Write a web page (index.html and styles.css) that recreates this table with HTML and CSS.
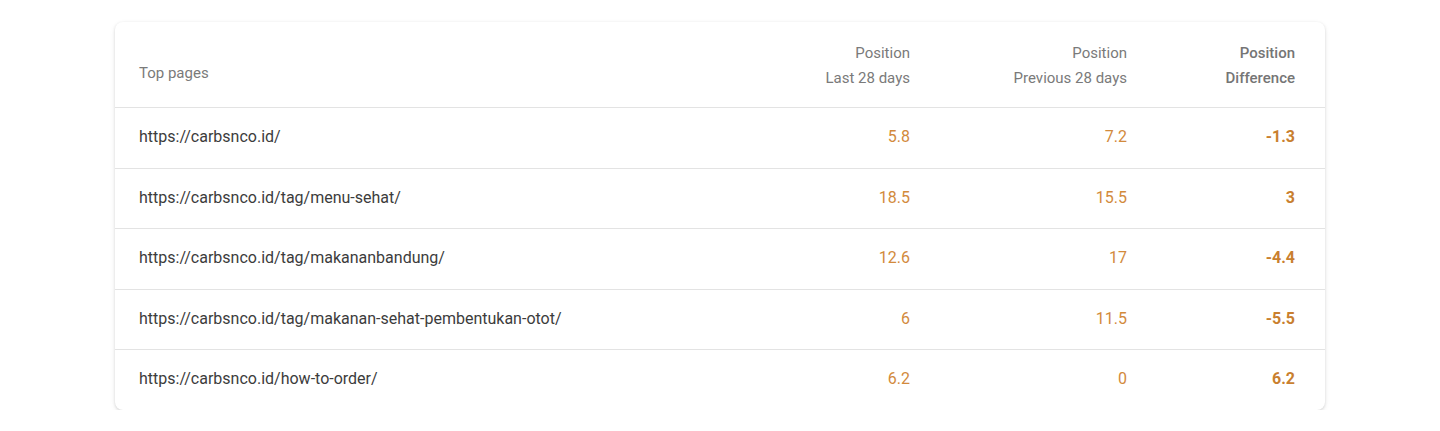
FILE: index.html
```html
<!DOCTYPE html>
<html lang="en">
<head>
<meta charset="utf-8">
<title>Top pages</title>
<link rel="stylesheet" href="styles.css">
</head>
<body>
<div class="card">
  <div class="row head">
    <div class="cell page top">Top pages</div>
    <div class="cell num">Position<br>Last 28 days</div>
    <div class="cell num">Position<br>Previous 28 days</div>
    <div class="cell num strong">Position<br>Difference</div>
  </div>
  <div class="row">
    <div class="cell page">https://carbsnco.id/</div>
    <div class="cell num val">5.8</div>
    <div class="cell num val">7.2</div>
    <div class="cell num val diff">-1.3</div>
  </div>
  <div class="row">
    <div class="cell page">https://carbsnco.id/tag/menu-sehat/</div>
    <div class="cell num val">18.5</div>
    <div class="cell num val">15.5</div>
    <div class="cell num val diff">3</div>
  </div>
  <div class="row">
    <div class="cell page">https://carbsnco.id/tag/makananbandung/</div>
    <div class="cell num val">12.6</div>
    <div class="cell num val">17</div>
    <div class="cell num val diff">-4.4</div>
  </div>
  <div class="row">
    <div class="cell page">https://carbsnco.id/tag/makanan-sehat-pembentukan-otot/</div>
    <div class="cell num val">6</div>
    <div class="cell num val">11.5</div>
    <div class="cell num val diff">-5.5</div>
  </div>
  <div class="row last">
    <div class="cell page">https://carbsnco.id/how-to-order/</div>
    <div class="cell num val">6.2</div>
    <div class="cell num val">0</div>
    <div class="cell num val diff">6.2</div>
  </div>
</div>
</body>
</html>
```

FILE: styles.css
```css
html, body {
  margin: 0;
  padding: 0;
  background: #ffffff;
}

body {
  font-family: Roboto, "Liberation Sans", Arial, sans-serif;
  padding-top: 22px;
}

.card {
  width: 1210px;
  margin: 0 auto;
  background: #ffffff;
  border-radius: 8px;
  box-shadow: 0 1px 3px rgba(0, 0, 0, 0.14), 0 2px 6px rgba(0, 0, 0, 0.06);
  overflow: hidden;
}

.row {
  display: grid;
  grid-template-columns: 1fr 200px 217px 168px;
  padding: 0 30px 2px 24px;
  height: 60.5px;
  box-sizing: border-box;
  align-items: center;
  border-bottom: 1px solid #e3e3e3;
}

.row.last {
  border-bottom: none;
  height: 60px;
  padding-bottom: 3px;
}

.row.head {
  height: 86px;
  align-items: end;
  padding-bottom: 16px;
}

.cell {
  font-size: 16px;
  color: #3c3c3c;
  white-space: nowrap;
}

.head .cell {
  font-size: 15px;
  line-height: 25px;
  color: #7a7a7a;
}

.head .cell.top {
  padding-bottom: 5px;
}

.head .cell.strong {
  font-weight: 500;
  color: #757575;
}

.num {
  text-align: right;
}

.val {
  color: #d28a3c;
}

.diff {
  font-weight: 700;
  color: #c97f2f;
}
```
